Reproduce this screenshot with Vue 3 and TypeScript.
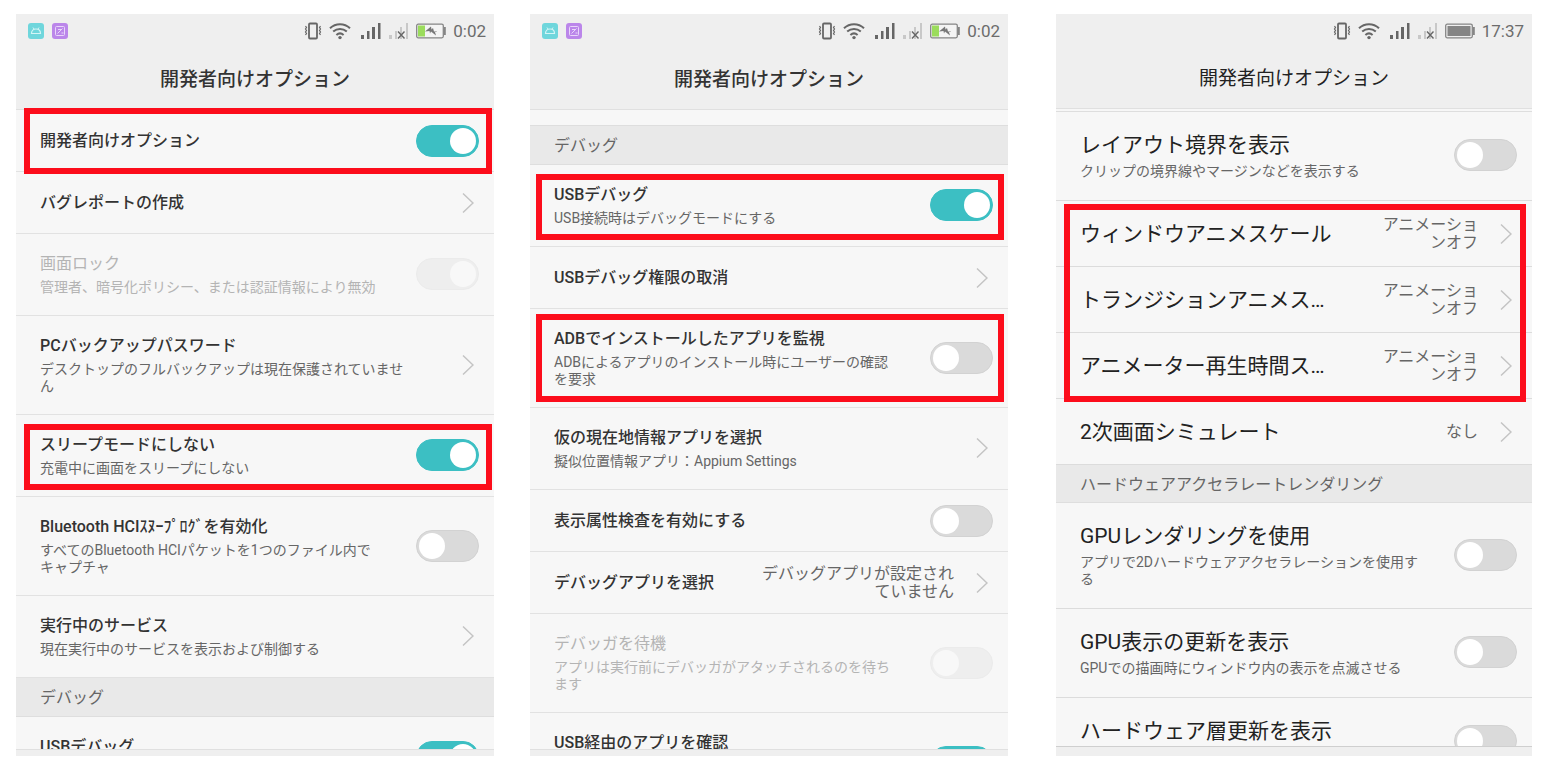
<script setup lang="ts">
interface Item {
  title: string
  summary?: string
  value?: string
  control: 'toggle' | 'link'
  checked?: boolean
  disabled?: boolean
  /** Number of summary lines reserved in a row whose lower part scrolls out of view. */
  reserve?: 1 | 2
}

interface Group {
  section?: string
  items: Item[]
  /** Inset of the highlight frame from the group: top, right, bottom, left (px). */
  frame?: [number, number, number, number]
}

interface Screen {
  id: string
  time: string
  charging: boolean
  notifications: boolean
  lead: 'none' | 'tall' | 'thin'
  large: boolean
  groups: Group[]
}

const screens: Screen[] = [
  {
    id: 'general',
    time: '0:02',
    charging: true,
    notifications: true,
    lead: 'none',
    large: false,
    groups: [
      { frame: [-2, 2, -2, 8], items: [{ title: '開発者向けオプション', control: 'toggle', checked: true }] },
      {
        items: [
          { title: 'バグレポートの作成', control: 'link' },
          {
            title: '画面ロック',
            summary: '管理者、暗号化ポリシー、または認証情報により無効',
            control: 'toggle',
            checked: true,
            disabled: true,
          },
          {
            title: 'PCバックアップパスワード',
            summary: 'デスクトップのフルバックアップは現在保護されていません',
            control: 'link',
          },
        ],
      },
      {
        frame: [9, 2, 7, 8],
        items: [
          { title: 'スリープモードにしない', summary: '充電中に画面をスリープにしない', control: 'toggle', checked: true },
        ],
      },
      {
        items: [
          {
            title: 'Bluetooth HCIｽﾇｰﾌﾟﾛｸﾞを有効化',
            summary: 'すべてのBluetooth HCIパケットを1つのファイル内でキャプチャ',
            control: 'toggle',
          },
          { title: '実行中のサービス', summary: '現在実行中のサービスを表示および制御する', control: 'link' },
        ],
      },
      {
        section: 'デバッグ',
        items: [{ title: 'USBデバッグ', control: 'toggle', checked: true, reserve: 1 }],
      },
    ],
  },
  {
    id: 'debug',
    time: '0:02',
    charging: true,
    notifications: true,
    lead: 'tall',
    large: false,
    groups: [
      { section: 'デバッグ', items: [] },
      {
        frame: [9, 4, 7, 6],
        items: [
          { title: 'USBデバッグ', summary: 'USB接続時はデバッグモードにする', control: 'toggle', checked: true },
        ],
      },
      { items: [{ title: 'USBデバッグ権限の取消', control: 'link' }] },
      {
        frame: [5, 4, 6, 6],
        items: [
          {
            title: 'ADBでインストールしたアプリを監視',
            summary: 'ADBによるアプリのインストール時にユーザーの確認を要求',
            control: 'toggle',
          },
        ],
      },
      {
        items: [
          { title: '仮の現在地情報アプリを選択', summary: '擬似位置情報アプリ：Appium Settings', control: 'link' },
          { title: '表示属性検査を有効にする', control: 'toggle' },
          { title: 'デバッグアプリを選択', value: 'デバッグアプリが設定されていません', control: 'link' },
          {
            title: 'デバッガを待機',
            summary: 'アプリは実行前にデバッガがアタッチされるのを待ちます',
            control: 'toggle',
            disabled: true,
          },
          { title: 'USB経由のアプリを確認', control: 'toggle', checked: true, reserve: 2 },
        ],
      },
    ],
  },
  {
    id: 'drawing',
    time: '17:37',
    charging: false,
    notifications: false,
    lead: 'thin',
    large: true,
    groups: [
      {
        items: [
          { title: 'レイアウト境界を表示', summary: 'クリップの境界線やマージンなどを表示する', control: 'toggle' },
        ],
      },
      {
        frame: [3, 6, -3, 8],
        items: [
          { title: 'ウィンドウアニメスケール', value: 'アニメーションオフ', control: 'link' },
          { title: 'トランジションアニメスケール', value: 'アニメーションオフ', control: 'link' },
          { title: 'アニメーター再生時間スケール', value: 'アニメーションオフ', control: 'link' },
        ],
      },
      { items: [{ title: '2次画面シミュレート', value: 'なし', control: 'link' }] },
      {
        section: 'ハードウェアアクセラレートレンダリング',
        items: [
          {
            title: 'GPUレンダリングを使用',
            summary: 'アプリで2Dハードウェアアクセラレーションを使用する',
            control: 'toggle',
          },
          { title: 'GPU表示の更新を表示', summary: 'GPUでの描画時にウィンドウ内の表示を点滅させる', control: 'toggle' },
          { title: 'ハードウェア層更新を表示', control: 'toggle', reserve: 1 },
        ],
      },
    ],
  },
]

const frameInset = (frame: [number, number, number, number]) => ({
  inset: frame.map((n) => `${n}px`).join(' '),
})
</script>

<template>
  <main class="board" lang="ja">
    <section v-for="s in screens" :key="s.id" class="phone" :class="{ large: s.large }">
      <header class="top">
        <div class="status">
          <div class="apps">
            <template v-if="s.notifications">
              <svg width="16" height="16" viewBox="0 0 16 16" aria-hidden="true">
                <rect width="16" height="16" rx="3" fill="#6fd6dc" />
                <path d="M3.500 10.500c0-3 2-4.500 4.500-4.500s4.500 1.500 4.500 4.500z" fill="none" stroke="#d4f5f6" stroke-width="1.200" />
                <path d="M5 4.500l1 1.500M11 4.500l-1 1.500" stroke="#d4f5f6" />
              </svg>
              <svg width="16" height="16" viewBox="0 0 16 16" aria-hidden="true">
                <rect width="16" height="16" rx="3" fill="#bb86ea" />
                <rect x="3.500" y="3.500" width="9" height="9" rx="1" fill="none" stroke="#e9d6fa" />
                <path d="M6 6.500h3M5.500 10.500l5-5M9.500 10h2" stroke="#e9d6fa" fill="none" />
              </svg>
            </template>
          </div>
          <svg width="18" height="18" viewBox="0 0 18 18" fill="none" stroke="#666" aria-hidden="true">
            <rect x="5" y="1.500" width="8" height="15" rx="1" stroke-width="1.800" />
            <path d="M1.500 4l1 1.500-1 1.500 1 1.500-1 1.500 1 1.500-1 1.500M16.500 4l-1 1.500 1 1.500-1 1.500 1 1.500-1 1.500 1 1.500" stroke-width="1.200" />
          </svg>
          <svg width="22" height="18" viewBox="0 0 22 18" fill="none" stroke="#666" stroke-width="2" aria-hidden="true">
            <path d="M1 6.200c5.700-5.400 14.300-5.400 20 0M4.200 9.600c4-3.600 9.600-3.600 13.600 0M7.400 12.900c2.200-1.900 5-1.900 7.200 0" />
            <circle cx="11" cy="15.600" r="1.700" fill="#666" stroke="none" />
          </svg>
          <svg width="23" height="18" viewBox="0 0 23 18" fill="#666" aria-hidden="true">
            <rect x="3" y="13" width="3" height="4" />
            <rect x="9" y="9" width="2.500" height="8" />
            <rect x="14" y="5" width="3" height="12" />
            <rect x="20" y="1" width="2.500" height="16" />
          </svg>
          <svg width="21" height="18" viewBox="0 0 21 18" fill="#c8c8c8" aria-hidden="true">
            <rect x="1" y="13" width="3" height="4" />
            <rect x="7" y="9" width="2" height="8" />
            <rect x="12" y="5" width="2" height="12" />
            <rect x="18" y="1" width="2" height="16" />
            <path d="M10 9.500l6.500 7M16.500 9.500l-6.500 7" stroke="#666" stroke-width="1.400" />
          </svg>
          <svg width="30" height="16" viewBox="0 0 30 16" aria-hidden="true">
            <rect x="0.700" y="1.200" width="26.600" height="13.600" rx="1.500" :fill="s.charging ? '#f4f4f4' : 'none'" stroke="#858585" stroke-width="1.300" />
            <rect x="28" y="4" width="1.800" height="8" fill="#858585" />
            <rect v-if="!s.charging" x="2.500" y="3" width="23" height="10" fill="#858585" />
            <template v-else>
              <rect x="2" y="2.500" width="7" height="11" fill="#9bdc5c" />
              <path d="M9 8.500l6-5 0.500 3 1.500-1.500 1 3.500h3l-0.500 0.500h-1.500l1 3.500-5-4-1 2-0.500-2.500z" fill="#777" />
            </template>
          </svg>
          <time class="clock">{{ s.time }}</time>
        </div>
        <h1 class="heading">開発者向けオプション</h1>
      </header>

      <div class="list">
        <div v-if="s.lead !== 'none'" class="lead" :class="s.lead"></div>
        <div v-for="(g, gi) in s.groups" :key="gi" class="group">
          <h2 v-if="g.section" class="section">{{ g.section }}</h2>
          <component
            :is="item.control === 'toggle' ? 'label' : 'button'"
            v-for="item in g.items"
            :key="item.title"
            class="row"
            :class="{
              disabled: item.disabled,
              single: !item.summary && !item.reserve,
              'reserve-one': item.reserve === 1,
              'reserve-two': item.reserve === 2,
            }"
            :type="item.control === 'link' ? 'button' : undefined"
          >
            <span class="body">
              <span class="title">{{ item.title }}</span>
              <span v-if="item.summary" class="summary">{{ item.summary }}</span>
            </span>
            <span v-if="item.value" class="value">{{ item.value }}</span>
            <input
              v-if="item.control === 'toggle'"
              class="toggle"
              type="checkbox"
              role="switch"
              :checked="item.checked"
              :disabled="item.disabled"
            />
            <svg v-else class="chevron" width="12" height="22" viewBox="0 0 12 22" aria-hidden="true">
              <path d="M1 1.500L11 11L1 20.500" fill="none" stroke="#c4c4c4" stroke-width="1.500" />
            </svg>
          </component>
          <div v-if="g.frame" class="frame" :style="frameInset(g.frame)"></div>
        </div>
      </div>
      <footer class="bottom"></footer>
    </section>
  </main>
</template>

<style>
body {
  background: #fff;
}
</style>

<style scoped>
.board {
  box-sizing: border-box;
  height: 100vh;
  padding: 14px 20px 24px 16px;
  display: grid;
  grid-template-columns: minmax(0, 478fr) minmax(0, 478fr) minmax(0, 488fr);
  grid-template-rows: minmax(0, 1fr);
  column-gap: 36px;
  font-family: Roboto, "Noto Sans CJK JP", sans-serif;
  color: #333;
}

.phone {
  display: flex;
  flex-direction: column;
  min-height: 0;
  background: #f7f7f7;
}

.phone.large {
  margin-left: 12px;
  color: #222;
}

.top {
  flex: none;
  background: #efefef;
  border-bottom: 1px solid #e0e0e0;
}

.status {
  display: flex;
  align-items: center;
  gap: 7px;
  height: 34px;
  padding: 0 8px 0 12px;
}

.apps {
  display: flex;
  gap: 8px;
  flex: 1;
}

.clock {
  font-size: 17px;
  line-height: 24px;
  color: #6c6c6c;
}

.heading {
  margin: 0;
  padding-top: 3px;
  font-size: 19px;
  line-height: 58px;
  font-weight: 500;
  text-align: center;
}

.large .heading {
  padding-top: 2px;
  font-weight: 400;
}

.list {
  flex: 1;
  min-height: 0;
  overflow: hidden;
  margin-top: -2px;
  padding-top: 2px;
}

.lead {
  box-sizing: border-box;
  border-bottom: 1px solid #dedede;
}

.lead.tall {
  height: 16px;
}

.lead.thin {
  height: 3px;
}

.group {
  position: relative;
}

.section {
  box-sizing: border-box;
  height: 39px;
  margin: 0;
  padding-left: 24px;
  border-bottom: 1px solid #dedede;
  background: #e9e9e9;
  color: #666;
  font-size: 16px;
  line-height: 40px;
  font-weight: 400;
}

.large .section {
  height: 38px;
}

.row {
  box-sizing: border-box;
  display: flex;
  align-items: center;
  width: 100%;
  min-height: 62px;
  margin: 0;
  padding: 18px 15px 19px 24px;
  border: 0;
  border-bottom: 1px solid #e2e2e2;
  border-radius: 0;
  background: none;
  color: inherit;
  font: inherit;
  text-align: left;
}

button.row {
  padding-right: 20px;
}

.large .row {
  min-height: 66px;
  padding-bottom: 20px;
  border-bottom-color: #dcdcdc;
}

.phone .row.single {
  padding-top: 0;
  padding-bottom: 0;
}

.row.reserve-one {
  min-height: 82px;
}

.row.reserve-two {
  min-height: 99px;
}

.large .row.reserve-one {
  min-height: 89px;
}

.reserve-one .body,
.reserve-two .body {
  align-self: flex-start;
}

.body {
  flex: 1;
  min-width: 0;
}

.title {
  display: block;
  font-size: 16px;
  line-height: 24px;
  font-weight: 500;
  white-space: nowrap;
  overflow: hidden;
  text-overflow: ellipsis;
}

.large .title {
  font-size: 21px;
  line-height: 30px;
  font-weight: 400;
}

.summary {
  display: block;
  margin-top: 3px;
  font-size: 14px;
  line-height: 17px;
  line-break: strict;
  color: #666;
}

.value {
  max-width: 200px;
  margin-left: 16px;
  font-size: 16px;
  line-height: 18px;
  text-align: right;
  color: #666;
}

.large .value {
  max-width: 98px;
  margin-left: 44px;
}

.disabled .title,
.disabled .summary {
  color: #b4b4b4;
}

.disabled .title {
  font-weight: 400;
}

.chevron {
  flex: none;
  margin-left: 48px;
}

.value + .chevron {
  margin-left: 22px;
}

.toggle {
  appearance: none;
  box-sizing: border-box;
  flex: none;
  display: flex;
  width: 63px;
  height: 32px;
  margin: 0 0 0 30px;
  padding: 2px;
  border: 1px solid #d2d2d2;
  border-radius: 16px;
  background: #dadada;
}

.toggle::before {
  content: "";
  width: 26px;
  height: 26px;
  border-radius: 13px;
  background: #fff;
}

.toggle:checked {
  justify-content: flex-end;
  border-color: #3cbfc3;
  background: #3cbfc3;
}

.toggle:disabled {
  border-color: #ebebeb;
  background: #eeeeee;
}

.toggle:disabled::before {
  background: #f8f8f8;
}

.frame {
  position: absolute;
  z-index: 1;
  border: 6px solid #fc0d1b;
  pointer-events: none;
}

.bottom {
  flex: none;
  height: 6px;
  border-top: 1px solid #e0e0e0;
  background: #efefef;
}

.large .bottom {
  height: 9px;
  border-top-color: #cfcfcf;
}
</style>
